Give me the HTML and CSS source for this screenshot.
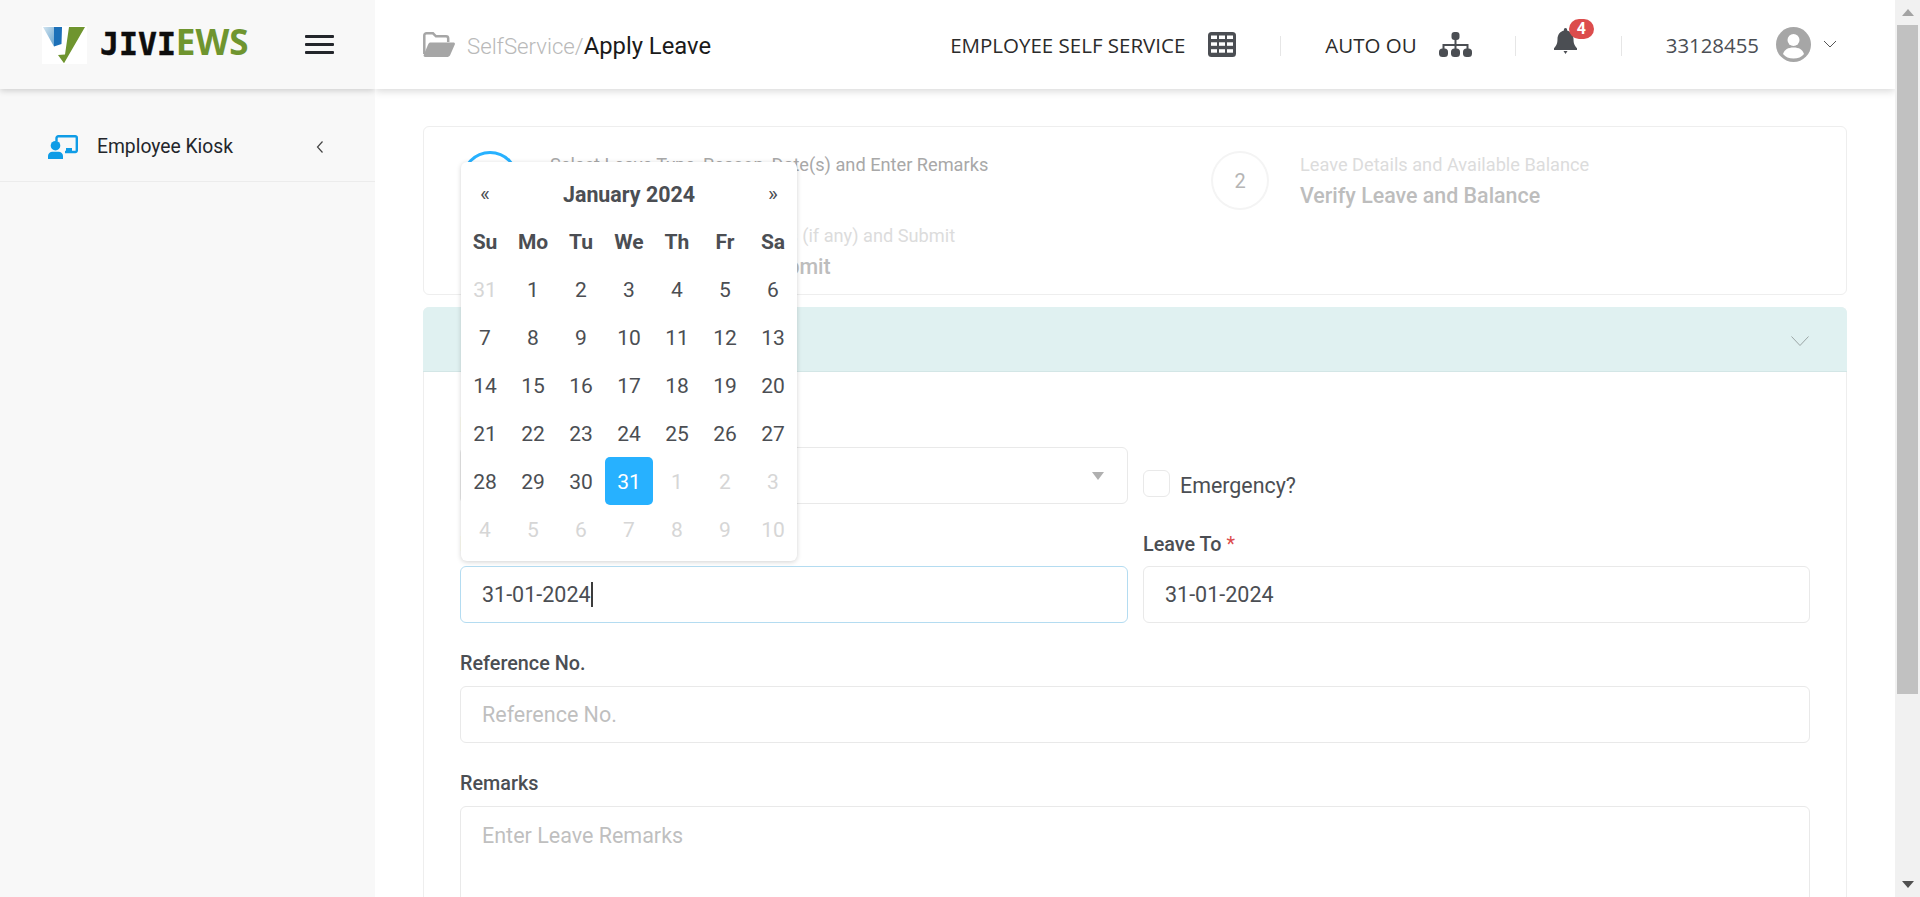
FILE: index.html
```html
<!DOCTYPE html>
<html lang="en">
<head>
<meta charset="utf-8">
<title>Apply Leave</title>
<link rel="stylesheet" href="styles.css">
</head>
<body>
<div class="app">
  <aside class="sidebar">
    <div class="brand">
      <svg class="logo-mark" viewBox="0 0 45 38" aria-hidden="true">
        <defs><linearGradient id="lb" x1="0" y1="0" x2="1" y2="1"><stop offset="0" stop-color="#d3e5f0"/><stop offset="1" stop-color="#6aa5cf"/></linearGradient></defs>
        <rect width="45" height="38" fill="#fff"/>
        <path d="M1 1h11v19.500z" fill="url(#lb)"/>
        <path d="M12 1h8l-.5 17-7.500 2.500z" fill="#1c70b8"/>
        <path d="M27 1h16L22 37.300 16 29l7-.5z" fill="#6f952f"/>
      </svg>
      <span class="logo-text"><span class="logo-dark">JIVI</span><span class="logo-green">EWS</span></span>
      <span class="hamburger"><i></i><i></i><i></i></span>
    </div>
    <nav class="side-item">
      <svg class="kiosk-icon" viewBox="0 0 30 24" aria-hidden="true">
        <path d="M8.500 6.500V3a1.800 1.800 0 0 1 1.800-1.800h17A1.500 1.500 0 0 1 28.800 2.700V15.500a1.500 1.500 0 0 1-1.500 1.500H17" fill="none" stroke="#0f9ce6" stroke-width="2.400"/>
        <circle cx="7.500" cy="10.700" r="4.800" fill="#0f9ce6"/>
        <path d="M0 24v-3C0 18.500 2 16.800 4.500 16.800h6c2.500 0 4.500 1.700 4.500 4.200v3z" fill="#0f9ce6"/>
        <rect x="18" y="13" width="6" height="4" fill="#0f9ce6"/>
      </svg>
      <span class="side-label">Employee Kiosk</span>
      <svg class="side-chevron" viewBox="0 0 8 14" aria-hidden="true"><path d="M6.500 1.500 1.500 7l5 5.500" fill="none" stroke="#444" stroke-width="1.200"/></svg>
    </nav>
  </aside>

  <div class="main">
    <header class="topbar">
      <svg class="folder-icon" viewBox="0 0 32 25" aria-hidden="true">
        <path d="M1.300 22V3.500a2.200 2.200 0 0 1 2.200-2.200H10l3 3h10a2.200 2.200 0 0 1 2.200 2.200V10" fill="none" stroke="#a6a6a6" stroke-width="2.500"/>
        <path d="M7.500 10.500h23c1 0 1.700.9 1.300 1.900l-4.600 10.700c-.5 1.100-1.400 1.900-2.700 1.900H2c-1.100 0-1.700-1-1.300-2L5.300 12c.4-.9 1.200-1.500 2.200-1.500z" fill="#a6a6a6"/>
      </svg>
      <div class="crumbs"><span class="crumb-muted">SelfService/</span><span class="crumb-current">Apply Leave</span></div>
      <div class="top-right">
        <span class="top-text">EMPLOYEE SELF SERVICE</span>
        <svg class="grid-icon" viewBox="0 0 28 25" aria-hidden="true">
          <rect width="28" height="25" rx="3.500" fill="#4b4e53"/>
          <g fill="#fff">
            <rect x="3" y="3.500" width="6" height="3.500"/><rect x="11" y="3.500" width="6" height="3.500"/><rect x="19" y="3.500" width="6" height="3.500"/>
            <rect x="3" y="10.300" width="6" height="3.500"/><rect x="11" y="10.300" width="6" height="3.500"/><rect x="19" y="10.300" width="6" height="3.500"/>
            <rect x="3" y="17.200" width="6" height="3.500"/><rect x="11" y="17.200" width="6" height="3.500"/><rect x="19" y="17.200" width="6" height="3.500"/>
          </g>
        </svg>
        <span class="divider d1"></span>
        <span class="top-text ou">AUTO OU</span>
        <svg class="sitemap-icon" viewBox="0 0 33 25" aria-hidden="true">
          <rect x="12.500" y="0" width="8" height="8" rx="3" fill="#4b4e53"/>
          <path d="M16.500 8v9M4.500 17v-4h24v4" fill="none" stroke="#4b4e53" stroke-width="2"/>
          <rect x="0" y="16.500" width="9" height="8.500" rx="3.500" fill="#4b4e53"/>
          <rect x="12" y="16.500" width="9" height="8.500" rx="3.500" fill="#4b4e53"/>
          <rect x="24" y="16.500" width="9" height="8.500" rx="3.500" fill="#4b4e53"/>
        </svg>
        <span class="divider d2"></span>
        <span class="bell-wrap">
          <svg class="bell-icon" viewBox="0 0 23 26" aria-hidden="true">
            <path d="M11.500 0c-1 0-1.600.8-1.600 1.800v.6C6 3.400 3.500 6.800 3.500 11c0 4.500-1 6.500-3.500 9.300V22h23v-1.700C20.500 17.500 19.500 15.500 19.500 11c0-4.200-2.500-7.600-6.400-8.600v-.6c0-1-.6-1.800-1.600-1.800z" fill="#4b4e53"/>
            <path d="M9.500 23h4l-2 3z" fill="#4b4e53"/>
          </svg>
          <span class="badge">4</span>
        </span>
        <span class="divider d3"></span>
        <span class="user-id">33128455</span>
        <svg class="avatar" viewBox="0 0 35 35" aria-hidden="true">
          <circle cx="17.500" cy="17.500" r="17.500" fill="#a6a6a6"/>
          <circle cx="17.500" cy="13" r="6" fill="#fff"/>
          <path d="M7 27c1.500-4.500 5-6.500 10.500-6.500S26.500 22.500 28 27c-2.500 3-6 4.500-10.500 4.500S9.500 30 7 27z" fill="#fff"/>
        </svg>
        <svg class="user-chevron" viewBox="0 0 14 8" aria-hidden="true"><path d="M1 1l6 6 6-6" fill="none" stroke="#555" stroke-width="1"/></svg>
      </div>
    </header>

    <div class="content">
      <section class="steps">
        <div class="step">
          <span class="circle circle-active"></span>
          <div class="step-text step-on"><p class="step-sub">Select Leave Type, Reason, Date(s) and Enter Remarks</p><p class="step-title">Enter Leave Details</p></div>
        </div>
        <div class="step">
          <span class="circle">2</span>
          <div class="step-text"><p class="step-sub">Leave Details and Available Balance</p><p class="step-title">Verify Leave and Balance</p></div>
        </div>
        <div class="step">
          <span class="circle">3</span>
          <div class="step-text"><p class="step-sub">Upload Supporting Documents (if any) and Submit</p><p class="step-title">Attach Document and Submit</p></div>
        </div>
      </section>

      <section class="panel">
        <div class="panel-head">
          <span class="panel-title">Leave Details</span>
          <svg class="panel-chevron" viewBox="0 0 18 10" aria-hidden="true"><path d="M.5.500 9 9.500 17.500.500" fill="none" stroke="#9aa5a5" stroke-width="1"/></svg>
        </div>
        <div class="panel-body">
          <div class="form-row">
            <div class="field">
              <label class="label">Leave Type <em>*</em></label>
              <div class="input select-box"><span class="select-arrow"></span></div>
            </div>
            <div class="field check-field">
              <span class="checkbox"></span>
              <span class="check-label">Emergency?</span>
            </div>
          </div>
          <div class="form-row">
            <div class="field field-anchor">
              <label class="label">Leave From <em>*</em></label>
              <div class="input input-focus">31-01-2024<span class="caret"></span></div>
              <div class="calendar">
                <div class="cal-head"><span>«</span><strong class="cal-month">January 2024</strong><span>»</span></div>
                <div class="cal-grid">
                  <b>Su</b><b>Mo</b><b>Tu</b><b>We</b><b>Th</b><b>Fr</b><b>Sa</b>
                  <span class="off">31</span><span>1</span><span>2</span><span>3</span><span>4</span><span>5</span><span>6</span>
                  <span>7</span><span>8</span><span>9</span><span>10</span><span>11</span><span>12</span><span>13</span>
                  <span>14</span><span>15</span><span>16</span><span>17</span><span>18</span><span>19</span><span>20</span>
                  <span>21</span><span>22</span><span>23</span><span>24</span><span>25</span><span>26</span><span>27</span>
                  <span>28</span><span>29</span><span>30</span><span class="sel">31</span><span class="off">1</span><span class="off">2</span><span class="off">3</span>
                  <span class="off">4</span><span class="off">5</span><span class="off">6</span><span class="off">7</span><span class="off">8</span><span class="off">9</span><span class="off">10</span>
                </div>
              </div>
            </div>
            <div class="field">
              <label class="label">Leave To <em>*</em></label>
              <input class="input" type="text" value="31-01-2024">
            </div>
          </div>
          <div class="field field-full">
            <label class="label label-wide">Reference No.</label>
            <input class="input" type="text" placeholder="Reference No.">
          </div>
          <div class="field field-full">
            <label class="label label-wide">Remarks</label>
            <textarea class="input textarea" placeholder="Enter Leave Remarks"></textarea>
          </div>
        </div>
      </section>
    </div>
  </div>

  <div class="scrollbar">
    <span class="sb-btn"><i class="tri-up"></i></span>
    <span class="sb-thumb"></span>
    <span class="sb-track"></span>
    <span class="sb-btn"><i class="tri-down"></i></span>
  </div>
</div>
</body>
</html>
```

FILE: styles.css
```css
* { box-sizing: border-box; }
html, body { margin: 0; height: 100%; overflow: hidden; }
body { font-family: Roboto, "Liberation Sans", sans-serif; color: #4b4e53; background: #fff; }
p { margin: 0; }

.app { display: flex; height: 897px; overflow: hidden; }

.sidebar { width: 375px; flex: none; background: #f8f8f8; position: relative; z-index: 3; overflow: hidden; }
.brand { height: 89px; display: flex; align-items: center; padding-left: 42px; box-shadow: 0 2px 6px rgba(0,0,0,.16); background: #f8f8f8; }
.logo-mark { width: 45px; height: 38px; flex: none; margin-right: 13px; }
.logo-text { line-height: 38px; font-weight: 700; white-space: nowrap; width: 148px; flex: none; margin-top: 2px; }
.logo-dark { font-family: "DejaVu Sans Mono", monospace; color: #0d0d0d; font-size: 31.5px; -webkit-text-stroke: .5px #0d0d0d; }
.logo-green { font-family: "Open Sans", sans-serif; color: #6f952f; font-size: 35px; }
.hamburger { display: flex; flex-direction: column; gap: 5px; width: 29px; margin-left: 57px; }
.hamburger i { display: block; height: 3px; background: #23262b; border-radius: 1px; }

.side-item { height: 93px; padding: 34px 48px 11px; display: flex; align-items: center; border-bottom: 1px solid #ececec; }
.kiosk-icon { width: 30px; height: 24px; flex: none; }
.side-label { margin-left: 19px; font-size: 19.3px; color: #23262b; flex: 1; white-space: nowrap; }
.side-chevron { width: 8px; height: 14px; flex: none; margin-right: 3px; }

.main { flex: 1; min-width: 0; display: flex; flex-direction: column; }
.topbar { height: 89px; flex: none; display: flex; align-items: center; padding-left: 48px; background: #fff; box-shadow: 0 2px 8px rgba(0,0,0,.16); position: relative; z-index: 2; }
.folder-icon { width: 32px; height: 25px; flex: none; margin-right: 12px; }
.crumbs { white-space: nowrap; margin-top: 2px; }
.crumb-muted { color: #b9b9b9; font-weight: 300; font-size: 22.2px; }
.crumb-current { color: #1a1a1a; font-weight: 400; font-size: 23.8px; }
.top-right { margin-left: auto; display: flex; align-items: center; height: 100%; }
.top-text { font-family: "Open Sans", sans-serif; font-size: 20.5px; color: #2b2b2b; white-space: nowrap; }
.grid-icon { width: 28px; height: 25px; margin-left: 23px; margin-top: -1px; flex: none; }
.divider { width: 1px; height: 20px; background: #e6e6e6; flex: none; margin-top: 2px; }
.d1 { margin-left: 44px; }
.ou { margin-left: 44px; }
.sitemap-icon { width: 33px; height: 25px; margin-left: 22px; margin-top: -1px; flex: none; }
.d2 { margin-left: 43px; }
.bell-wrap { position: relative; width: 23px; height: 26px; margin-left: 38px; margin-top: -7px; flex: none; }
.bell-icon { width: 23px; height: 26px; display: block; }
.badge { position: absolute; left: 15px; top: -9px; width: 25px; height: 20px; border-radius: 10px; background: #dc4c4c; color: #fff; font-size: 16px; font-weight: 700; line-height: 20px; text-align: center; }
.d3 { margin-left: 44px; }
.user-id { margin-left: 44px; font-family: "Open Sans", sans-serif; font-size: 20.4px; color: #4b4e53; }
.avatar { width: 35px; height: 35px; margin-left: 17px; flex: none; }
.user-chevron { width: 14px; height: 8px; margin-left: 12px; margin-right: 58px; margin-top: -2px; flex: none; }

.content { flex: 1; min-height: 0; padding: 37px 48px 0 48px; display: flex; flex-direction: column; gap: 12px; }

.steps { height: 169px; flex: none; border: 1px solid #eeeeee; border-radius: 6px; padding: 24px 37px 0; display: grid; grid-template-columns: 750px 1fr; grid-auto-rows: 59px; row-gap: 12px; }
.step { display: flex; align-items: flex-start; }
.circle { width: 58px; height: 59px; border-radius: 50%; border: 2px solid #f4f4f4; flex: none; display: flex; align-items: center; justify-content: center; font-size: 20px; color: #b5b5b5; margin-right: 31px; }
.circle-active { border: 3px solid #27b1ff; }
.step-text { padding-top: 2px; white-space: nowrap; }
.step-sub { font-size: 18.2px; line-height: 24px; color: #dcdcdc; margin-bottom: 7px; }
.step-title { font-size: 21.4px; line-height: 24px; font-weight: 500; color: #bdbdbd; }
.step-on .step-sub { color: #a8a8a8; }

.panel { flex: 1; min-height: 0; border: 1px solid #eeeeee; border-bottom: 0; border-radius: 6px 6px 0 0; display: flex; flex-direction: column; }
.panel-head { height: 65px; flex: none; margin: -1px -1px 0; background: #e0f1f1; border-bottom: 1px solid #d3e6e6; border-radius: 6px 6px 0 0; display: flex; align-items: center; justify-content: space-between; padding: 0 38px 0 40px; }
.panel-title { font-size: 18px; font-weight: 500; }
.panel-chevron { width: 18px; height: 10px; margin-top: 4px; }
.panel-body { padding: 42px 33px 0 36px; }

.form-row { display: grid; grid-template-columns: 668px 667px; column-gap: 15px; }
.field { display: flex; flex-direction: column; margin-bottom: 29px; position: relative; }
.label { font-size: 19.8px; line-height: 24px; font-weight: 500; color: #4b4e53; margin-bottom: 9px; }
.label-wide { margin-bottom: 10px; }
.label em { color: #dc4c4c; font-style: normal; font-weight: 400; }
.input { display: block; width: 100%; height: 57px; border: 1.500px solid #e9e9e9; border-radius: 6px; padding: 0 21px; background: #fff; font: 400 21.5px/54px Roboto, sans-serif; color: #4b4e53; outline: 0; }
.input::placeholder { color: #bfbfbf; opacity: 1; }
.select-box { position: relative; height: 57px; }
.select-arrow { position: absolute; right: 23px; top: 24px; width: 0; height: 0; border-left: 6px solid transparent; border-right: 6px solid transparent; border-top: 8px solid #b0b0b0; }
.check-field { flex-direction: row; align-items: center; align-self: end; margin-bottom: 32px; }
.checkbox { width: 27px; height: 27px; border: 1.500px solid #e9e9e9; border-radius: 6px; flex: none; }
.check-label { margin-left: 10px; margin-top: 6px; font-size: 21.4px; line-height: 30px; color: #4b4e53; }

.input-focus { border-color: #b4dcf1; display: flex; align-items: center; }
.caret { display: inline-block; width: 2px; height: 25px; background: #3c3c3c; }
.field-full { width: 1350px; }
.textarea { height: 140px; padding-top: 1px; resize: none; line-height: 56px; }

.calendar { position: absolute; left: 1px; bottom: 62px; width: 336px; height: 399px; padding: 7px 0 9px; background: #fff; border-radius: 6px; box-shadow: 0 1px 5px rgba(0,0,0,.18); z-index: 5; color: #4b4e53; }
.cal-head { height: 48px; padding-top: 2px; display: grid; grid-template-columns: 48px 1fr 48px; align-items: center; text-align: center; font-size: 21px; }
.cal-month { font-weight: 700; font-size: 21.4px; }
.cal-grid { display: grid; grid-template-columns: repeat(7, 48px); grid-auto-rows: 48px; }
.cal-grid b, .cal-grid span { display: flex; align-items: center; justify-content: center; font-size: 21px; border-radius: 5px; padding-top: 2px; }
.cal-grid b { font-weight: 700; }
.cal-grid .off { color: #d6d6d6; }
.cal-grid .sel { background: #27b1ff; color: #fff; }

.scrollbar { width: 25px; flex: none; background: #f1f1f1; display: flex; flex-direction: column; align-items: center; position: relative; z-index: 4; }
.sb-btn { width: 100%; height: 25px; flex: none; display: flex; align-items: center; justify-content: center; }
.tri-up { width: 0; height: 0; border-left: 6px solid transparent; border-right: 6px solid transparent; border-bottom: 7px solid #a3a3a3; }
.tri-down { width: 0; height: 0; border-left: 6px solid transparent; border-right: 6px solid transparent; border-top: 7px solid #505050; }
.sb-thumb { width: 21px; height: 669px; flex: none; background: #c1c1c1; }
.sb-track { flex: 1; }
```
